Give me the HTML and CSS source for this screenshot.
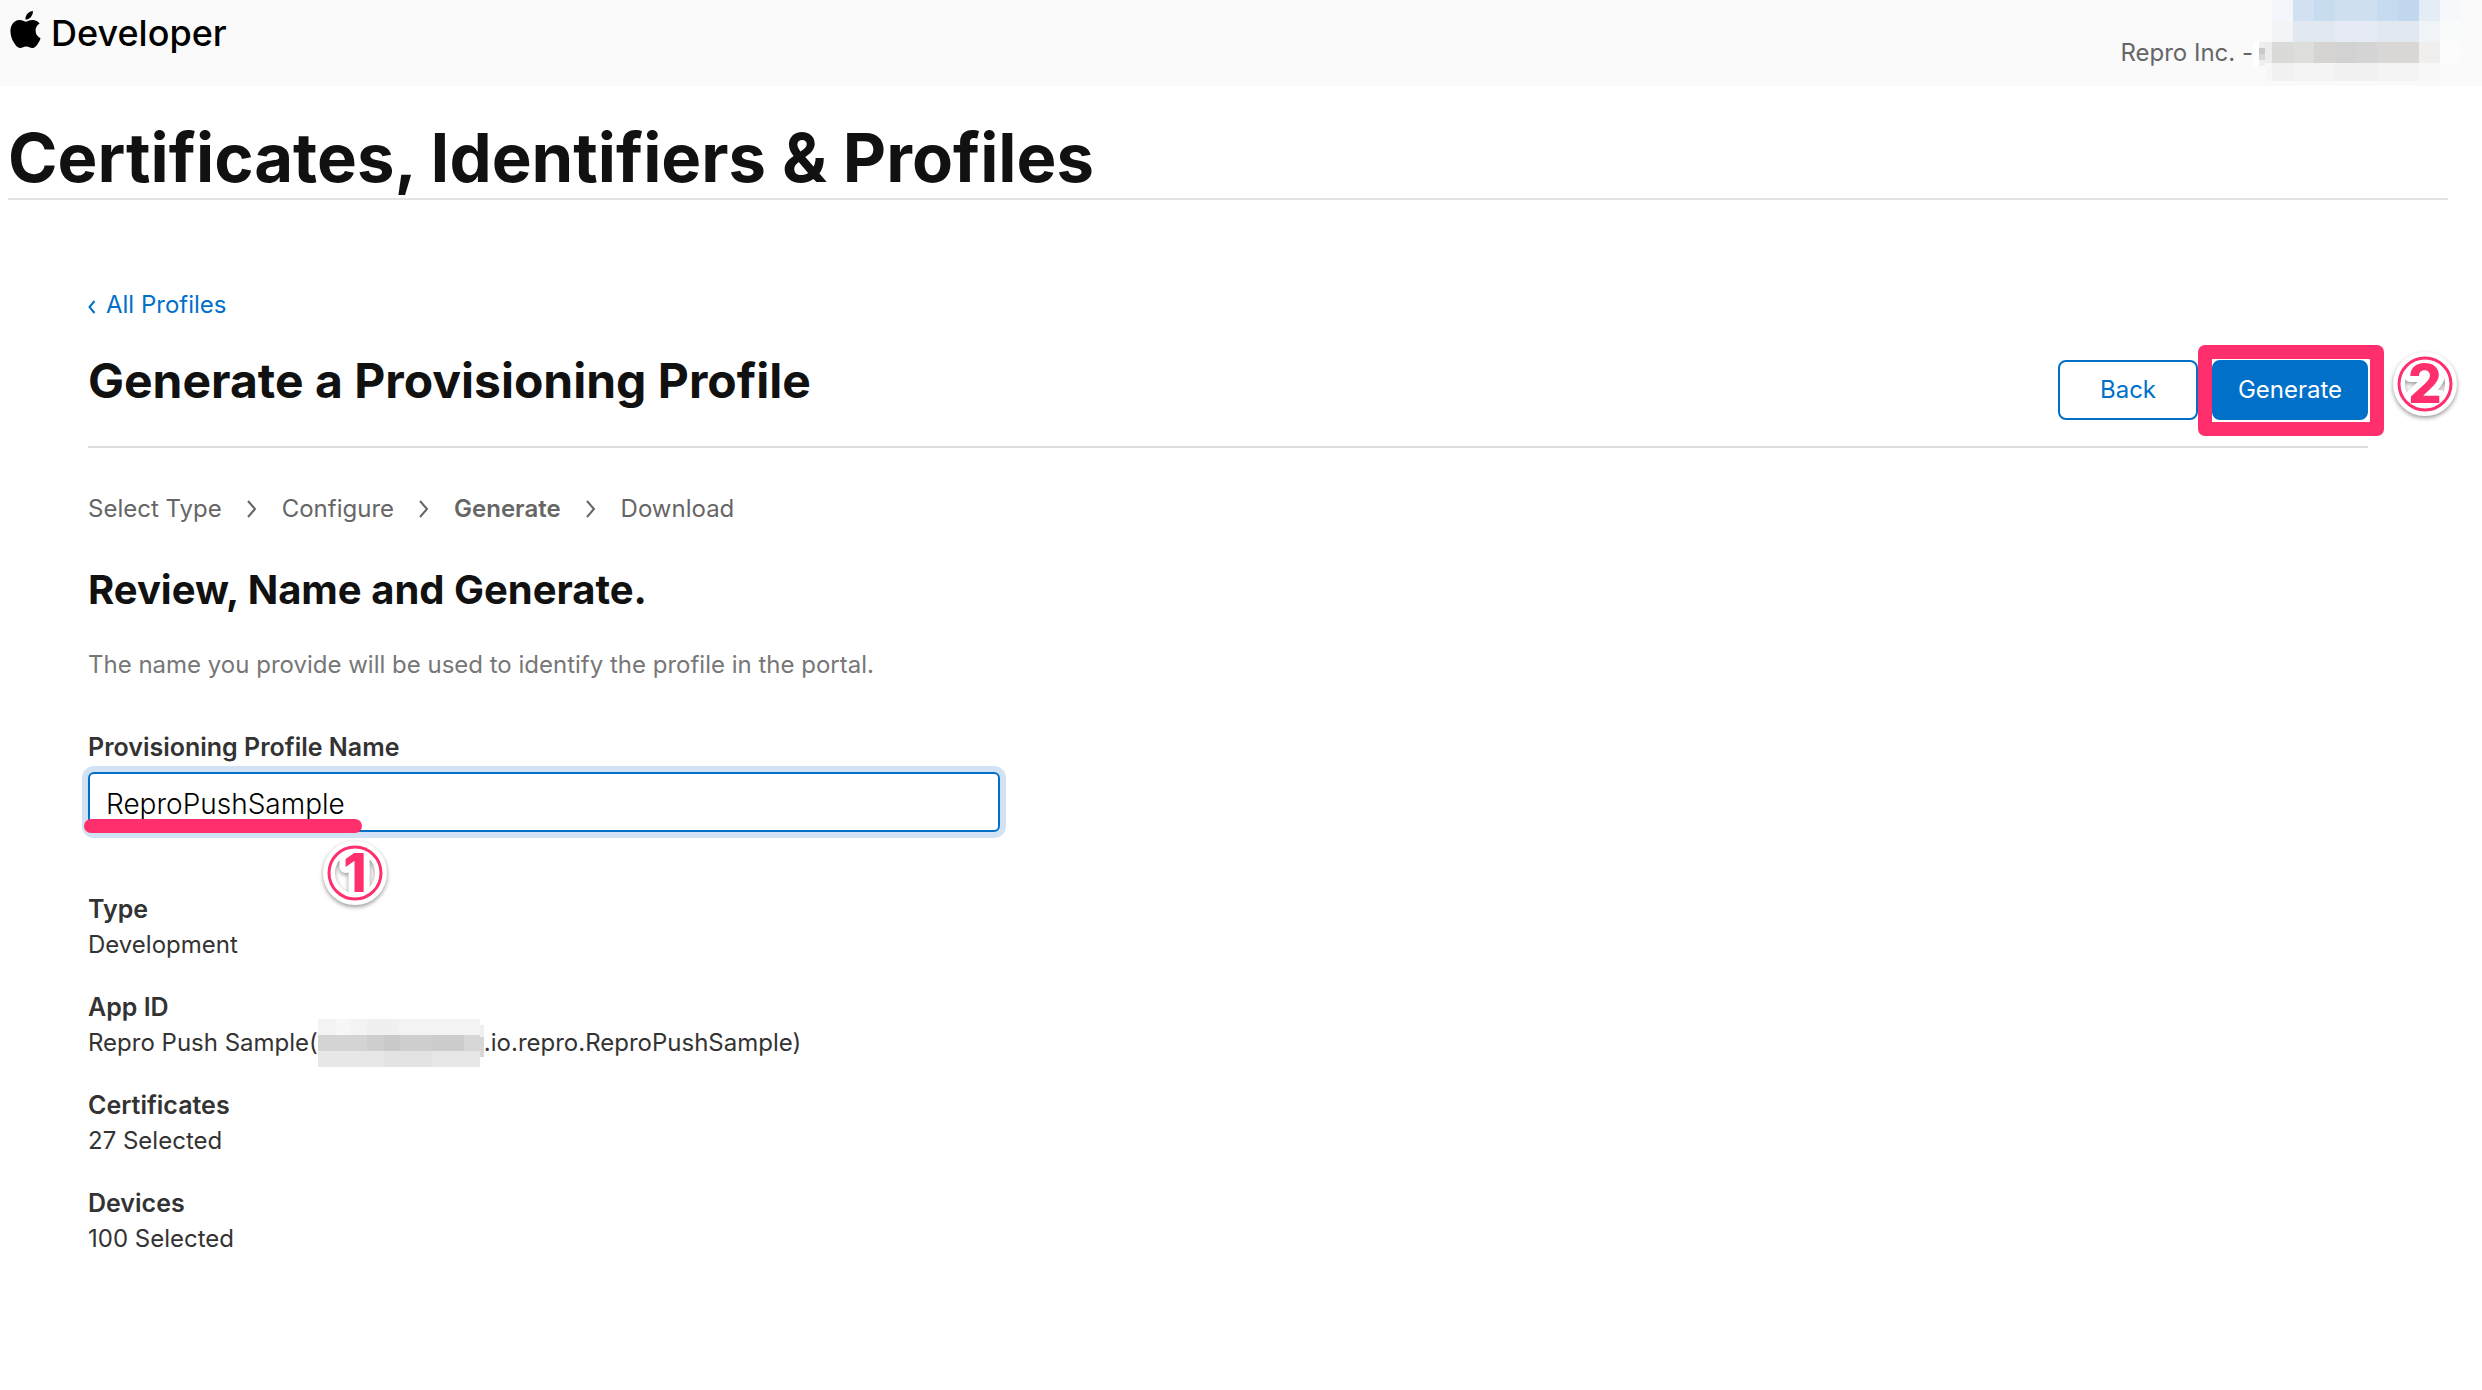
FILE: index.html
```
<!DOCTYPE html>
<html lang="en">
<head>
    <meta charset="UTF-8">
    <title>Certificates, Identifiers &amp; Profiles</title>
    <link rel="stylesheet" href="styles.css">
</head>
<body>
    <header class="site-header">
        <a class="brand" href="#">
            <svg class="apple" viewBox="2.2 0 19.6 24" aria-hidden="true">
                <path d="M12.152 6.896c-.948 0-2.415-1.078-3.96-1.04-2.04.027-3.91 1.183-4.961 3.014-2.117 3.675-.546 9.103 1.519 12.09 1.013 1.454 2.208 3.09 3.792 3.039 1.52-.065 2.09-.987 3.935-.987 1.831 0 2.35.987 3.96.948 1.637-.026 2.676-1.48 3.676-2.948 1.156-1.688 1.636-3.325 1.662-3.415-.039-.013-3.182-1.221-3.22-4.857-.026-3.04 2.48-4.494 2.597-4.559-1.429-2.09-3.623-2.324-4.39-2.376-2-.156-3.675 1.09-4.61 1.09zM15.53 3.83c.843-1.012 1.4-2.427 1.245-3.83-1.207.052-2.662.805-3.532 1.818-.78.896-1.454 2.338-1.273 3.714 1.338.104 2.715-.688 3.559-1.701"/>
            </svg>
            Developer
        </a>
        <div class="account">
            <span>Repro Inc. -</span>
            <svg class="account-mask" viewBox="0 0 208 81" shape-rendering="crispEdges" aria-hidden="true">
                <rect x="0" y="42" width="6" height="24" fill="#ffffff"/>
                <rect x="6" y="42" width="6" height="24" fill="#efefef"/>
                <rect x="6" y="48" width="6" height="6" fill="#c8c8c8"/>
                <rect x="6" y="54" width="6" height="6" fill="#d8d8d8"/>
                <rect x="12" y="42" width="7" height="21" fill="#ececec"/>
                <rect x="13" y="63" width="6" height="18" fill="#f7f7f7"/>
                <rect x="19" y="0" width="21" height="21" fill="#f3f7fb"/>
                <rect x="40" y="0" width="21" height="21" fill="#d2e1f2"/>
                <rect x="61" y="0" width="21" height="21" fill="#c8dcf0"/>
                <rect x="82" y="0" width="42" height="21" fill="#cedff0"/>
                <rect x="124" y="0" width="21" height="21" fill="#c6dbf0"/>
                <rect x="145" y="0" width="21" height="21" fill="#c1d7ed"/>
                <rect x="166" y="0" width="21" height="21" fill="#e4ecf6"/>
                <rect x="187" y="0" width="21" height="21" fill="#f6f8fb"/>
                <rect x="19" y="21" width="21" height="21" fill="#f3f4f6"/>
                <rect x="40" y="21" width="42" height="21" fill="#e1e8f0"/>
                <rect x="82" y="21" width="42" height="21" fill="#e6eaf4"/>
                <rect x="124" y="21" width="42" height="21" fill="#e1e8f0"/>
                <rect x="166" y="21" width="21" height="21" fill="#f0f4f6"/>
                <rect x="187" y="21" width="21" height="21" fill="#fafcfb"/>
                <rect x="19" y="42" width="21" height="21" fill="#dadad9"/>
                <rect x="40" y="42" width="21" height="21" fill="#dddddc"/>
                <rect x="61" y="42" width="21" height="21" fill="#d5d4d3"/>
                <rect x="82" y="42" width="21" height="21" fill="#d2d2d2"/>
                <rect x="103" y="42" width="21" height="21" fill="#d5d4d4"/>
                <rect x="124" y="42" width="42" height="21" fill="#d8d7d5"/>
                <rect x="166" y="42" width="21" height="21" fill="#f0efed"/>
                <rect x="187" y="42" width="21" height="21" fill="#fcfcfc"/>
                <rect x="19" y="63" width="21" height="18" fill="#f1f1f1"/>
                <rect x="40" y="63" width="42" height="18" fill="#f4f4f4"/>
                <rect x="82" y="63" width="42" height="18" fill="#f1f1f1"/>
                <rect x="124" y="63" width="42" height="18" fill="#f3f4f3"/>
                <rect x="166" y="63" width="21" height="18" fill="#f8f8f8"/>
            </svg>
        </div>
    </header>

    <h1 class="page-title">Certificates, Identifiers &amp; Profiles</h1>

    <main class="content">
        <a class="back-link" href="#">
            <svg class="back-arrow" viewBox="0 0 8 14" aria-hidden="true"><path d="M6.5 1 1.5 7l5 6"/></svg>
            All Profiles
        </a>

        <div class="title-bar">
            <h2>Generate a Provisioning Profile</h2>
            <div class="actions">
                <button type="button" class="btn">Back</button>
                <div class="highlight">
                    <button type="submit" form="profile-form" class="btn btn-primary">Generate</button>
                    <svg class="badge badge-two" viewBox="0 0 72 72" aria-hidden="true">
                        <g class="badge-back"><circle cx="36" cy="36" r="26"/><text x="36" y="55">2</text></g>
                        <g class="badge-front"><circle cx="36" cy="36" r="26"/><text x="36" y="55">2</text></g>
                    </svg>
                </div>
            </div>
        </div>

        <nav class="steps">
            <span>Select Type</span>
            <svg viewBox="0 0 10 18" aria-hidden="true"><path d="m1 1 7 8-7 8"/></svg>
            <span>Configure</span>
            <svg viewBox="0 0 10 18" aria-hidden="true"><path d="m1 1 7 8-7 8"/></svg>
            <span class="current">Generate</span>
            <svg viewBox="0 0 10 18" aria-hidden="true"><path d="m1 1 7 8-7 8"/></svg>
            <span>Download</span>
        </nav>

        <h3>Review, Name and Generate.</h3>
        <p class="hint">The name you provide will be used to identify the profile in the portal.</p>

        <form id="profile-form" class="profile-form">
            <label for="profile-name">Provisioning Profile Name</label>
            <div class="field">
                <input type="text" id="profile-name" value="ReproPushSample" spellcheck="false">
                <div class="underline"></div>
                <svg class="badge badge-one" viewBox="0 0 72 72" aria-hidden="true">
                    <g class="badge-back"><circle cx="36" cy="36" r="26"/><text x="36" y="55">1</text></g>
                    <g class="badge-front"><circle cx="36" cy="36" r="26"/><text x="36" y="55">1</text></g>
                </svg>
            </div>
        </form>

        <dl class="summary">
            <div>
                <dt>Type</dt>
                <dd>Development</dd>
            </div>
            <div>
                <dt>App ID</dt>
                <dd class="app-id">
                    <span>Repro Push Sample(</span>
                    <svg class="app-mask" viewBox="0 0 166 48" shape-rendering="crispEdges" aria-hidden="true">
                        <rect x="0" y="0" width="162" height="16" fill="#f3f3f3"/>
                        <rect x="18" y="0" width="15" height="16" fill="#f7f7f7"/>
                        <rect x="49" y="0" width="32" height="16" fill="#f0f0f0"/>
                        <rect x="0" y="16" width="49" height="16" fill="#d4d4d4"/>
                        <rect x="49" y="16" width="17" height="16" fill="#cecece"/>
                        <rect x="66" y="16" width="16" height="16" fill="#c9c9c9"/>
                        <rect x="82" y="16" width="32" height="16" fill="#cfcfcf"/>
                        <rect x="114" y="16" width="32" height="16" fill="#cccccc"/>
                        <rect x="146" y="16" width="16" height="16" fill="#d7d7d7"/>
                        <rect x="0" y="32" width="162" height="16" fill="#e7e7e7"/>
                        <rect x="66" y="32" width="48" height="16" fill="#e3e3e3"/>
                        <rect x="162" y="6" width="4" height="12" fill="#efefef"/>
                        <rect x="162" y="18" width="4" height="20" fill="#d7d7d7"/>
                    </svg>
                    <span>.io.repro.ReproPushSample)</span>
                </dd>
            </div>
            <div>
                <dt>Certificates</dt>
                <dd>27 Selected</dd>
            </div>
            <div>
                <dt>Devices</dt>
                <dd>100 Selected</dd>
            </div>
        </dl>
    </main>
</body>
</html>
```
FILE: styles.css
```
* {
    box-sizing: border-box;
}

body {
    margin: 0;
    background: #fff;
    color: #333;
    font-family: Inter, "Liberation Sans", sans-serif;
    font-size: 24px;
    line-height: 36px;
}

a {
    color: #0070c9;
    text-decoration: none;
}

h1, h2, h3 {
    margin: 0;
    color: #111;
    font-weight: 700;
}

/* header */
.site-header {
    display: flex;
    justify-content: space-between;
    align-items: flex-start;
    height: 86px;
    padding: 0 21px 0 10px;
    background: #fafafa;
}

.brand {
    display: flex;
    align-items: center;
    gap: 10px;
    padding-top: 10px;
    color: #000;
    font-size: 36px;
    font-weight: 500;
    line-height: 46px;
}

.apple {
    width: 31px;
    height: 37px;
    margin-bottom: 8px;
}

.account {
    display: flex;
    color: #666;
}

.account span {
    padding-top: 35px;
}

.account-mask {
    width: 208px;
    height: 81px;
}

.page-title {
    margin: 32px 34px 0 8px;
    border-bottom: 2px solid #e3e3e3;
    font-size: 67px;
    line-height: 80px;
}

/* content */
.content {
    padding: 87px 114px 60px 88px;
}

.back-link {
    display: flex;
    align-items: center;
    gap: 10px;
    width: fit-content;
}

.back-arrow {
    width: 8px;
    height: 14px;
    margin-top: 4px;
    fill: none;
    stroke: #0070c9;
    stroke-width: 2;
}

.title-bar {
    display: flex;
    justify-content: space-between;
    align-items: flex-start;
    margin-top: 30px;
    padding-bottom: 26px;
    border-bottom: 2px solid #ddd;
}

.title-bar h2 {
    font-size: 48px;
    line-height: 56px;
}

.actions {
    display: flex;
    gap: 14px;
    padding-top: 7px;
}

.btn {
    display: block;
    min-width: 140px;
    height: 60px;
    padding: 0 22px;
    border: 2px solid #0070c9;
    border-radius: 8px;
    background: #fff;
    color: #0070c9;
    font: inherit;
    cursor: pointer;
}

.btn-primary {
    min-width: 156px;
    background: #0070c9;
    color: #fff;
}

/* marks */
.highlight {
    position: relative;
}

.highlight::after {
    content: "";
    position: absolute;
    inset: -15px -16px -16px -14px;
    border: 14px solid #ff2f6e;
    border-radius: 7px;
    pointer-events: none;
}

.badge {
    position: absolute;
    width: 72px;
    height: 72px;
    overflow: visible;
}

.badge-two {
    top: -12px;
    right: -93px;
}

.badge-one {
    top: 65px;
    left: 231px;
}

.badge text {
    font-size: 53px;
    font-weight: 800;
    text-anchor: middle;
}

.badge-back {
    fill: #fff;
    stroke: #fff;
    stroke-width: 12;
    stroke-linejoin: round;
    filter: drop-shadow(0 2px 2px rgba(0, 0, 0, 0.4));
}

.badge-front {
    fill: #ff2f6e;
}

.badge circle {
    fill: none;
}

.badge-front circle {
    stroke: #ff2f6e;
    stroke-width: 3;
}

/* steps */
.steps {
    display: flex;
    align-items: center;
    gap: 25px;
    margin-top: 43px;
    color: #666;
}

.steps svg {
    width: 10px;
    height: 18px;
    fill: none;
    stroke: #666;
    stroke-width: 2;
}

.steps .current {
    font-weight: 600;
}

.content h3 {
    margin-top: 40px;
    font-size: 40px;
    line-height: 46px;
}

.hint {
    margin: 34px 0 46px;
    color: #777;
}

.profile-form label {
    display: block;
    margin-bottom: 7px;
    font-size: 25px;
    font-weight: 600;
}

.field {
    position: relative;
    width: 40%;
}

.field input {
    display: block;
    width: 100%;
    height: 60px;
    padding: 4px 16px 0;
    border: 2px solid #0070c9;
    border-radius: 6px;
    outline: none;
    background: #fff;
    box-shadow: 0 0 0 6px #d1e2f4;
    color: #000;
    font: inherit;
    font-size: 28px;
    font-weight: 300;
}

.underline {
    position: absolute;
    bottom: -1px;
    left: -4px;
    width: 278px;
    height: 14px;
    border-radius: 7px;
    background: #ff2f6e;
}

/* summary */
.summary {
    display: grid;
    gap: 26px;
    margin: 59px 0 0;
}

.summary dt {
    font-size: 25px;
    font-weight: 600;
}

.summary dd {
    margin: 0;
}

.app-id {
    display: flex;
    align-items: center;
    height: 36px;
}

.app-mask {
    width: 166px;
    height: 48px;
}
```
